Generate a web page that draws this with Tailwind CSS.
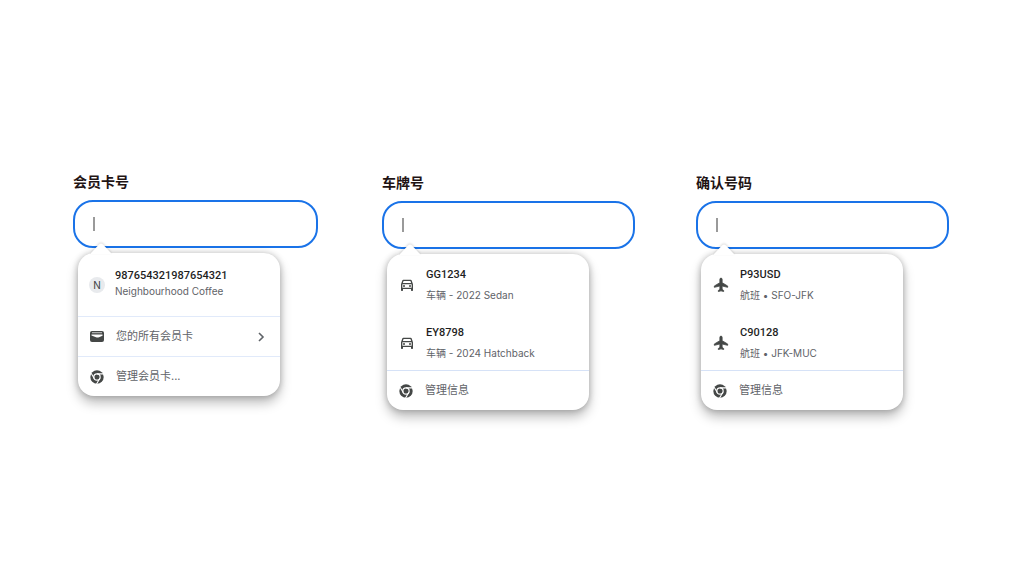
<!DOCTYPE html>
<html lang="zh-CN">
<head>
    <meta charset="UTF-8">
    <meta name="viewport" content="width=device-width, initial-scale=1.0">
    <title>自动填充</title>
    <script src="https://cdn.jsdelivr.net/npm/@tailwindcss/browser@4"></script>
</head>
<body class="bg-white min-h-screen font-['Inter','Noto_Sans_CJK_SC',sans-serif]">
    <!-- Shared icons -->
    <svg class="hidden" aria-hidden="true">
        <symbol id="icon-chrome" viewBox="0 0 24 24">
            <circle cx="12" cy="12" r="11.5" fill="#444746"/>
            <circle cx="12" cy="12" r="6.4" fill="#fff"/>
            <circle cx="12" cy="12" r="4.4" fill="#444746"/>
            <path d="M12 6.600h11M7.300 14.700 2 5.500M16.700 14.700l-5.500 9.500" stroke="#fff" stroke-width="1.800" fill="none"/>
        </symbol>
        <symbol id="icon-car" viewBox="0 0 24 24">
            <path fill="#444746" d="M18.92 5.01C18.72 4.42 18.16 4 17.5 4h-11c-.66 0-1.21.42-1.42 1.01L3 11v9c0 .55.45 1 1 1h1c.55 0 1-.45 1-1v-2h12v2c0 .55.45 1 1 1h1c.55 0 1-.45 1-1v-9l-2.08-5.990zM6.85 6h10.290l1.040 3H5.810l1.040-3zM19 16H5v-5h14v5z"/>
            <circle cx="7.500" cy="13.500" r="1.500" fill="#444746"/>
            <circle cx="16.500" cy="13.500" r="1.500" fill="#444746"/>
        </symbol>
        <symbol id="icon-flight" viewBox="0 0 24 24">
            <path fill="#444746" stroke="#444746" stroke-width="1.200" stroke-linejoin="round" d="M22 15.500v-2l-8.300-5V3.500c0-1-.7-1.900-1.700-1.900s-1.700.9-1.700 1.900v5L2 13.500v2l8.300-2V18.500l-2.300 1.700V21.800l4-1 4 1v-1.600l-2.300-1.700v-5l8.300 2z"/>
        </symbol>
    </svg>

    <main class="flex items-start pt-[172px] pl-[73px] pr-[69px]">
        <!-- Loyalty card -->
        <section class="flex-[245] min-w-0">
            <label for="loyaltyInput" class="block text-sm leading-5 font-bold text-[#1f1414]">会员卡号</label>
            <div class="relative mt-2">
                <input id="loyaltyInput" type="text" class="block w-full h-12 px-5 rounded-[20px] border-2 border-[#1a73e8] outline-none">
                <span class="absolute left-5 top-[17px] w-0.5 h-[14px] bg-[#9a9a9a]"></span>
            </div>
            <div class="relative mt-[5px] ml-[5px] w-[202px] rounded-2xl bg-white shadow-[0_0_6px_rgba(0,0,0,0.24),0_7px_12px_rgba(0,0,0,0.26)]">
                <svg class="absolute left-[13px] -top-[10px] w-5 h-[11px] drop-shadow-[0_-1px_1px_rgba(0,0,0,0.15)]" viewBox="0 0 20 11"><path fill="#fff" d="M0 11v-1L8 1.500q2-2 4 0L20 10v1z"/></svg>
                <button type="button" class="flex items-center w-full h-[63px] pl-[11px] text-left">
                    <span class="w-4 h-4 rounded-full bg-[#e8eaed] text-[10px] leading-4 text-center text-[#3c4043]">N</span>
                    <span class="ml-[10px] pb-1">
                        <span class="block text-[11px] leading-4 font-medium text-[#1f1f1f] font-['Roboto',sans-serif]">987654321987654321</span>
                        <span class="block text-[10px] leading-[14px] text-[#5f6368]">Neighbourhood Coffee</span>
                    </span>
                </button>
                <button type="button" class="flex items-center w-full h-10 pl-3 pr-[14px] border-t border-[#e1eafa] text-left text-[11px] text-[#5f6368]">
                    <svg class="w-[14px] h-[14px]" viewBox="0 0 14 14">
                        <rect x="0" y="1" width="14" height="11" rx="2" fill="#444746"/>
                        <path fill="#fff" fill-opacity="0.8" d="M2 2.300h10v.9H2z"/>
                        <path fill="#fff" d="M1.500 4.500h11v1.300L9 7.200Q7.500 8 6 7.200L1.500 5.500z"/>
                    </svg>
                    <span class="ml-3">您的所有会员卡</span>
                    <svg class="ml-auto w-[10px] h-[10px]" viewBox="0 0 10 10" fill="none" stroke="#5f6368" stroke-width="1.600"><path d="M3 1l4 4-4 4"/></svg>
                </button>
                <button type="button" class="flex items-center w-full h-10 pl-3 border-t border-[#e1eafa] text-left text-[11px] text-[#5f6368]">
                    <svg class="w-[14px] h-[14px]"><use href="#icon-chrome"/></svg>
                    <span class="ml-3">管理会员卡...</span>
                </button>
            </div>
        </section>

        <!-- Licence plate -->
        <section class="flex-[253] min-w-0 ml-16 pt-px">
            <label for="plateInput" class="block text-sm leading-5 font-bold text-[#1f1414]">车牌号</label>
            <div class="relative mt-2">
                <input id="plateInput" type="text" class="block w-full h-12 px-5 rounded-[20px] border-2 border-[#1a73e8] outline-none">
                <span class="absolute left-5 top-[17px] w-0.5 h-[14px] bg-[#9a9a9a]"></span>
            </div>
            <div class="relative mt-[5px] ml-[5px] w-[202px] rounded-2xl bg-white shadow-[0_0_6px_rgba(0,0,0,0.24),0_7px_12px_rgba(0,0,0,0.26)]">
                <svg class="absolute left-[13px] -top-[10px] w-5 h-[11px] drop-shadow-[0_-1px_1px_rgba(0,0,0,0.15)]" viewBox="0 0 20 11"><path fill="#fff" d="M0 11v-1L8 1.500q2-2 4 0L20 10v1z"/></svg>
                <button type="button" class="flex items-center w-full h-[58px] pl-3 pt-[3px] text-left">
                    <svg class="w-4 h-4"><use href="#icon-car"/></svg>
                    <span class="ml-[11px]">
                        <span class="block text-[11px] leading-5 font-medium text-[#1f1f1f] font-['Roboto',sans-serif]">GG1234</span>
                        <span class="block text-[10px] leading-5 text-[#5f6368]">车辆 - 2022 Sedan</span>
                    </span>
                </button>
                <button type="button" class="flex items-center w-full h-[58px] pl-3 pt-[3px] text-left">
                    <svg class="w-4 h-4"><use href="#icon-car"/></svg>
                    <span class="ml-[11px]">
                        <span class="block text-[11px] leading-5 font-medium text-[#1f1f1f] font-['Roboto',sans-serif]">EY8798</span>
                        <span class="block text-[10px] leading-5 text-[#5f6368]">车辆 - 2024 Hatchback</span>
                    </span>
                </button>
                <button type="button" class="flex items-center w-full h-10 pl-3 border-t border-[#d6e2f7] text-left text-[11px] text-[#5f6368]">
                    <svg class="w-[14px] h-[14px]"><use href="#icon-chrome"/></svg>
                    <span class="ml-3">管理信息</span>
                </button>
            </div>
        </section>

        <!-- Confirmation number -->
        <section class="flex-[253] min-w-0 ml-[61px] pt-px">
            <label for="confirmInput" class="block text-sm leading-5 font-bold text-[#1f1414]">确认号码</label>
            <div class="relative mt-2">
                <input id="confirmInput" type="text" class="block w-full h-12 px-5 rounded-[20px] border-2 border-[#1a73e8] outline-none">
                <span class="absolute left-5 top-[17px] w-0.5 h-[14px] bg-[#9a9a9a]"></span>
            </div>
            <div class="relative mt-[5px] ml-[5px] w-[202px] rounded-2xl bg-white shadow-[0_0_6px_rgba(0,0,0,0.24),0_7px_12px_rgba(0,0,0,0.26)]">
                <svg class="absolute left-[13px] -top-[10px] w-5 h-[11px] drop-shadow-[0_-1px_1px_rgba(0,0,0,0.15)]" viewBox="0 0 20 11"><path fill="#fff" d="M0 11v-1L8 1.500q2-2 4 0L20 10v1z"/></svg>
                <button type="button" class="flex items-center w-full h-[58px] pl-3 pt-[3px] text-left">
                    <svg class="w-4 h-4"><use href="#icon-flight"/></svg>
                    <span class="ml-[11px]">
                        <span class="block text-[11px] leading-5 font-medium text-[#1f1f1f] font-['Roboto',sans-serif]">P93USD</span>
                        <span class="block text-[10px] leading-5 text-[#5f6368]">航班 • SFO-JFK</span>
                    </span>
                </button>
                <button type="button" class="flex items-center w-full h-[58px] pl-3 pt-[3px] text-left">
                    <svg class="w-4 h-4"><use href="#icon-flight"/></svg>
                    <span class="ml-[11px]">
                        <span class="block text-[11px] leading-5 font-medium text-[#1f1f1f] font-['Roboto',sans-serif]">C90128</span>
                        <span class="block text-[10px] leading-5 text-[#5f6368]">航班 • JFK-MUC</span>
                    </span>
                </button>
                <button type="button" class="flex items-center w-full h-10 pl-3 border-t border-[#d6e2f7] text-left text-[11px] text-[#5f6368]">
                    <svg class="w-[14px] h-[14px]"><use href="#icon-chrome"/></svg>
                    <span class="ml-3">管理信息</span>
                </button>
            </div>
        </section>
    </main>
</body>
</html>
